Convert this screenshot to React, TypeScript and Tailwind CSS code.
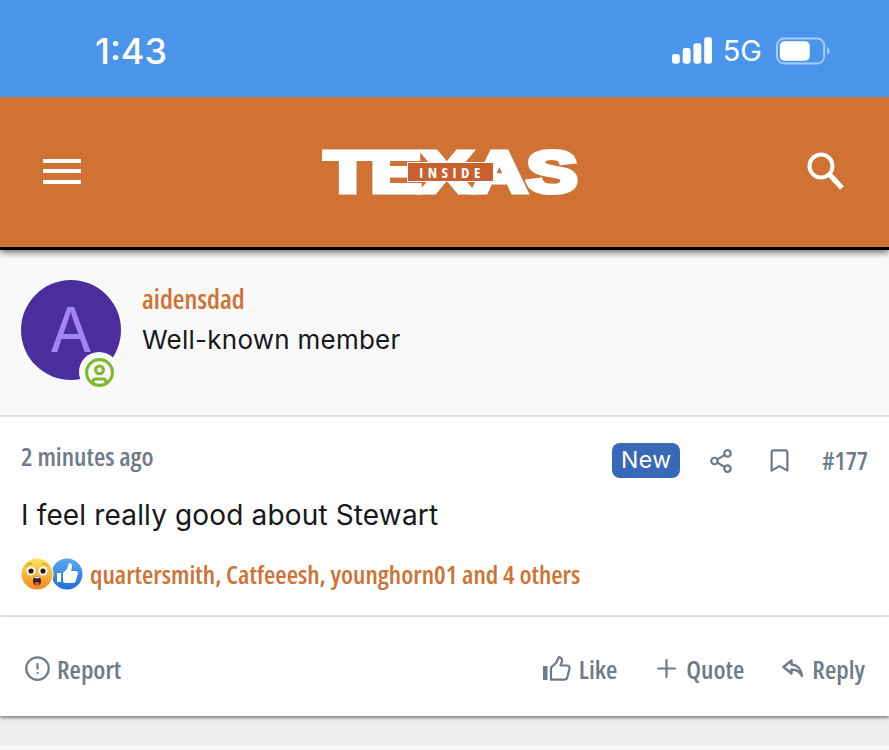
import { CircleAlert, CircleUser, Share2, Bookmark, Plus } from 'lucide-react';

const narrow = "font-['Open_Sans',sans-serif] [font-stretch:78%]";

function SignalIcon() {
  return (
    <svg width="40" height="27" viewBox="0 0 41 27" fill="white">
      <rect x="0" y="17" width="8" height="10" rx="2.500" />
      <rect x="11" y="11" width="8" height="16" rx="2.500" />
      <rect x="22" y="6" width="8" height="21" rx="2.500" />
      <rect x="33" y="0" width="8" height="27" rx="2.500" />
    </svg>
  );
}

function BatteryIcon() {
  return (
    <svg width="54" height="28" viewBox="0 0 56 28">
      <rect x="1" y="1" width="49" height="26" rx="7.500" fill="none" stroke="#a9cdf6" strokeWidth="2" />
      <rect x="4" y="4" width="31" height="20" rx="4.500" fill="white" />
      <path d="M53 10c2 1 2.600 2.500 2.600 4s-.6 3-2.600 4z" fill="#a9cdf6" />
    </svg>
  );
}

function MenuIcon() {
  return (
    <div className="flex w-[38px] flex-col gap-[6.500px]">
      <div className="h-[4px] bg-white" />
      <div className="h-[4px] bg-white" />
      <div className="h-[4px] bg-white" />
    </div>
  );
}

function SearchIcon() {
  return (
    <svg width="38" height="38" viewBox="0 0 38 38" fill="none" stroke="white">
      <circle cx="14" cy="14" r="11.500" strokeWidth="4" />
      <path d="M23 23l12 13" strokeWidth="5" />
    </svg>
  );
}

function Logo() {
  return (
    <div className="relative ml-[14px] h-[48px] w-[258px]">
      <svg width="258" height="48" viewBox="0 0 258 48" className="block">
        <text
          x="2.500"
          y="45"
          textLength="253"
          lengthAdjust="spacingAndGlyphs"
          fill="white"
          stroke="white"
          strokeWidth="5"
          fontFamily="Liberation Sans"
          fontWeight="700"
          fontSize="57"
        >
          TEXAS
        </text>
      </svg>
      <div className="absolute left-[85px] top-[15px] flex h-[20px] w-[87px] items-center justify-center border border-white bg-[#c9602f] pl-[3px] font-['Open_Sans',sans-serif] text-[15px] font-bold leading-none tracking-[4.500px] text-white [font-stretch:75%]">
        INSIDE
      </div>
    </div>
  );
}

function ShockedEmoji() {
  return (
    <svg width="34" height="34" viewBox="0 0 34 34" className="relative z-10 -ml-[1px]">
      <defs>
        <linearGradient id="face" x1="0" y1="0" x2="0" y2="1">
          <stop offset="0" stopColor="#fde35a" />
          <stop offset="1" stopColor="#f48a1d" />
        </linearGradient>
      </defs>
      <circle cx="17" cy="17" r="16.500" fill="white" />
      <circle cx="17" cy="17" r="15.500" fill="url(#face)" />
      <path d="M6 9.500c1.500-2 3.500-3 6-3M28 9.500c-1.500-2-3.500-3-6-3" stroke="#c9781c" strokeWidth="1" fill="none" />
      <circle cx="11" cy="14" r="4.500" fill="white" />
      <circle cx="23" cy="14" r="4.500" fill="white" />
      <circle cx="11" cy="14" r="2.600" fill="#241a12" />
      <circle cx="23" cy="14" r="2.600" fill="#241a12" />
      <ellipse cx="17" cy="24" rx="4" ry="5" fill="#3a1c14" />
      <ellipse cx="17" cy="27" rx="2.500" ry="2" fill="#e8574a" />
      <rect x="14.500" y="19.500" width="5" height="1.800" rx="0.800" fill="white" />
    </svg>
  );
}

function ThumbEmoji() {
  return (
    <svg width="32" height="32" viewBox="0 0 32 32" className="-ml-[3px]">
      <defs>
        <linearGradient id="blue" x1="0" y1="0" x2="0" y2="1">
          <stop offset="0" stopColor="#5aa8f3" />
          <stop offset="1" stopColor="#1f6fd8" />
        </linearGradient>
      </defs>
      <circle cx="16" cy="16" r="15.500" fill="url(#blue)" />
      <rect x="6" y="15" width="4" height="9" fill="white" />
      <path d="M12 15l4-4 2-6c2 0 3.500 1.500 3 4l-1 4h5c1.500 0 2.300 1.500 1.800 3l-2 7c-.4 1.200-1.300 2-2.600 2H15c-1.500 0-3-1-3-1z" fill="white" />
    </svg>
  );
}

function ThumbOutline() {
  return (
    <svg width="28" height="25" viewBox="0 0 28 25" fill="none" stroke="#6f7a88" strokeWidth="2.200">
      <rect x="0" y="10" width="4.500" height="14" fill="#6f7a88" stroke="none" />
      <path d="M8 23V11.500l5-4.500 3-6c2.500.5 3.500 2.500 2.800 5L17.500 9.500h6.500c1.800 0 2.900 1.500 2.500 3.200l-2.200 8.600c-.4 1.500-1.500 2.400-3 2.400H8z" strokeLinejoin="round" />
    </svg>
  );
}

function ReplyArrow() {
  return (
    <svg width="22" height="19" viewBox="0 0 22 19" fill="none" stroke="#6f7a88" strokeWidth="2.400" strokeLinejoin="round">
      <path d="M9.500 1.500L1.500 8l8 6.500v-4c4.500 0 8 1.500 10.500 6.500-.5-6-4-11-10.500-11.500z" />
    </svg>
  );
}

export default function App() {
  return (
    <div className="flex h-[750px] w-[889px] flex-col overflow-hidden bg-[#f5f6f7] font-['Inter',sans-serif]">
      <div className="flex h-[97px] items-center justify-between bg-[#4a94ec] pl-[95px] pr-[59px] pt-[4px] text-white">
        <span className="text-[36px] font-medium leading-none">1:43</span>
        <div className="flex items-center">
          <SignalIcon />
          <span className="ml-[11px] mr-[14px] text-[29px] leading-none">5G</span>
          <BatteryIcon />
        </div>
      </div>

      <div className="relative z-10 flex h-[150px] items-center justify-between bg-[#d07234] pb-[2px] pl-[43px] pr-[44px] shadow-[0_3px_0_#000,0_6px_6px_rgba(0,0,0,0.5)]">
        <MenuIcon />
        <Logo />
        <SearchIcon />
      </div>

      <div className="flex h-[170px] shrink-0 gap-[21px] border-b-2 border-[#dfe1e3] bg-[#f9f9f9] pl-[21px] pt-[33px]">
        <div className="relative h-[100px] w-[100px] shrink-0">
          <div className="flex h-[100px] w-[100px] items-center justify-center rounded-full bg-[#4b2e9e] text-[62px] leading-none text-[#a684f0]">
            A
          </div>
          <div className="absolute left-[58px] top-[72px] flex h-[40px] w-[40px] items-center justify-center rounded-full bg-[#f9f9f9]">
            <CircleUser size={31} strokeWidth={2.400} color="#7fb82e" />
          </div>
        </div>
        <div className="flex flex-col">
          <span className={`${narrow} text-[27px] font-semibold leading-[38px] text-[#d07234]`}>aidensdad</span>
          <span className="mt-[3px] text-[26px] leading-[38px] tracking-[0.250px] text-[#16181b]">Well-known member</span>
        </div>
      </div>

      <div className="flex h-[200px] shrink-0 flex-col border-b-2 border-[#dfe1e3] bg-white px-[21px]">
        <div className="flex h-[61px] items-end justify-between">
          <span className={`${narrow} pb-[6px] text-[26px] font-semibold leading-[32px] text-[#707b89]`}>2 minutes ago</span>
          <div className="flex items-center">
            <span className="flex h-[35px] w-[68px] items-center justify-center rounded-[8px] bg-[#3a68b9] text-[23px] leading-none tracking-[0.500px] text-white">
              New
            </span>
            <Share2 size={26} strokeWidth={2} color="#707b89" className="ml-[28px]" />
            <Bookmark size={27} strokeWidth={2} color="#707b89" className="ml-[32px]" />
            <span className={`${narrow} ml-[29px] text-[25px] font-semibold leading-none text-[#707b89]`}>#177</span>
          </div>
        </div>
        <p className="mt-[18px] text-[28px] leading-[38px] tracking-[0.150px] text-[#16181b]">I feel really good about Stewart</p>
        <div className="mt-[23px] flex items-center">
          <ShockedEmoji />
          <ThumbEmoji />
          <span className={`${narrow} ml-[7px] text-[26px] font-semibold leading-none text-[#d07234]`}>
            quartersmith, Catfeeesh, younghorn01 and 4 others
          </span>
        </div>
      </div>

      <div className={`${narrow} relative z-10 flex h-[99px] shrink-0 items-center justify-between bg-white pl-[24px] pr-[24px] pt-[4px] text-[26px] font-semibold leading-none text-[#707b89] shadow-[0_2px_3px_rgba(0,0,0,0.45)]`}>
        <div className="flex items-center gap-[6px]">
          <CircleAlert size={27} strokeWidth={2} />
          <span>Report</span>
        </div>
        <div className="flex items-center">
          <ThumbOutline />
          <span className="ml-[8px]">Like</span>
          <Plus size={29} strokeWidth={1.800} className="ml-[35px]" />
          <span className="ml-[5px]">Quote</span>
          <span className="ml-[38px]"><ReplyArrow /></span>
          <span className="ml-[8px]">Reply</span>
        </div>
      </div>

      <div className="h-[29px] shrink-0 bg-[#ebedef]" />
    </div>
  );
}
